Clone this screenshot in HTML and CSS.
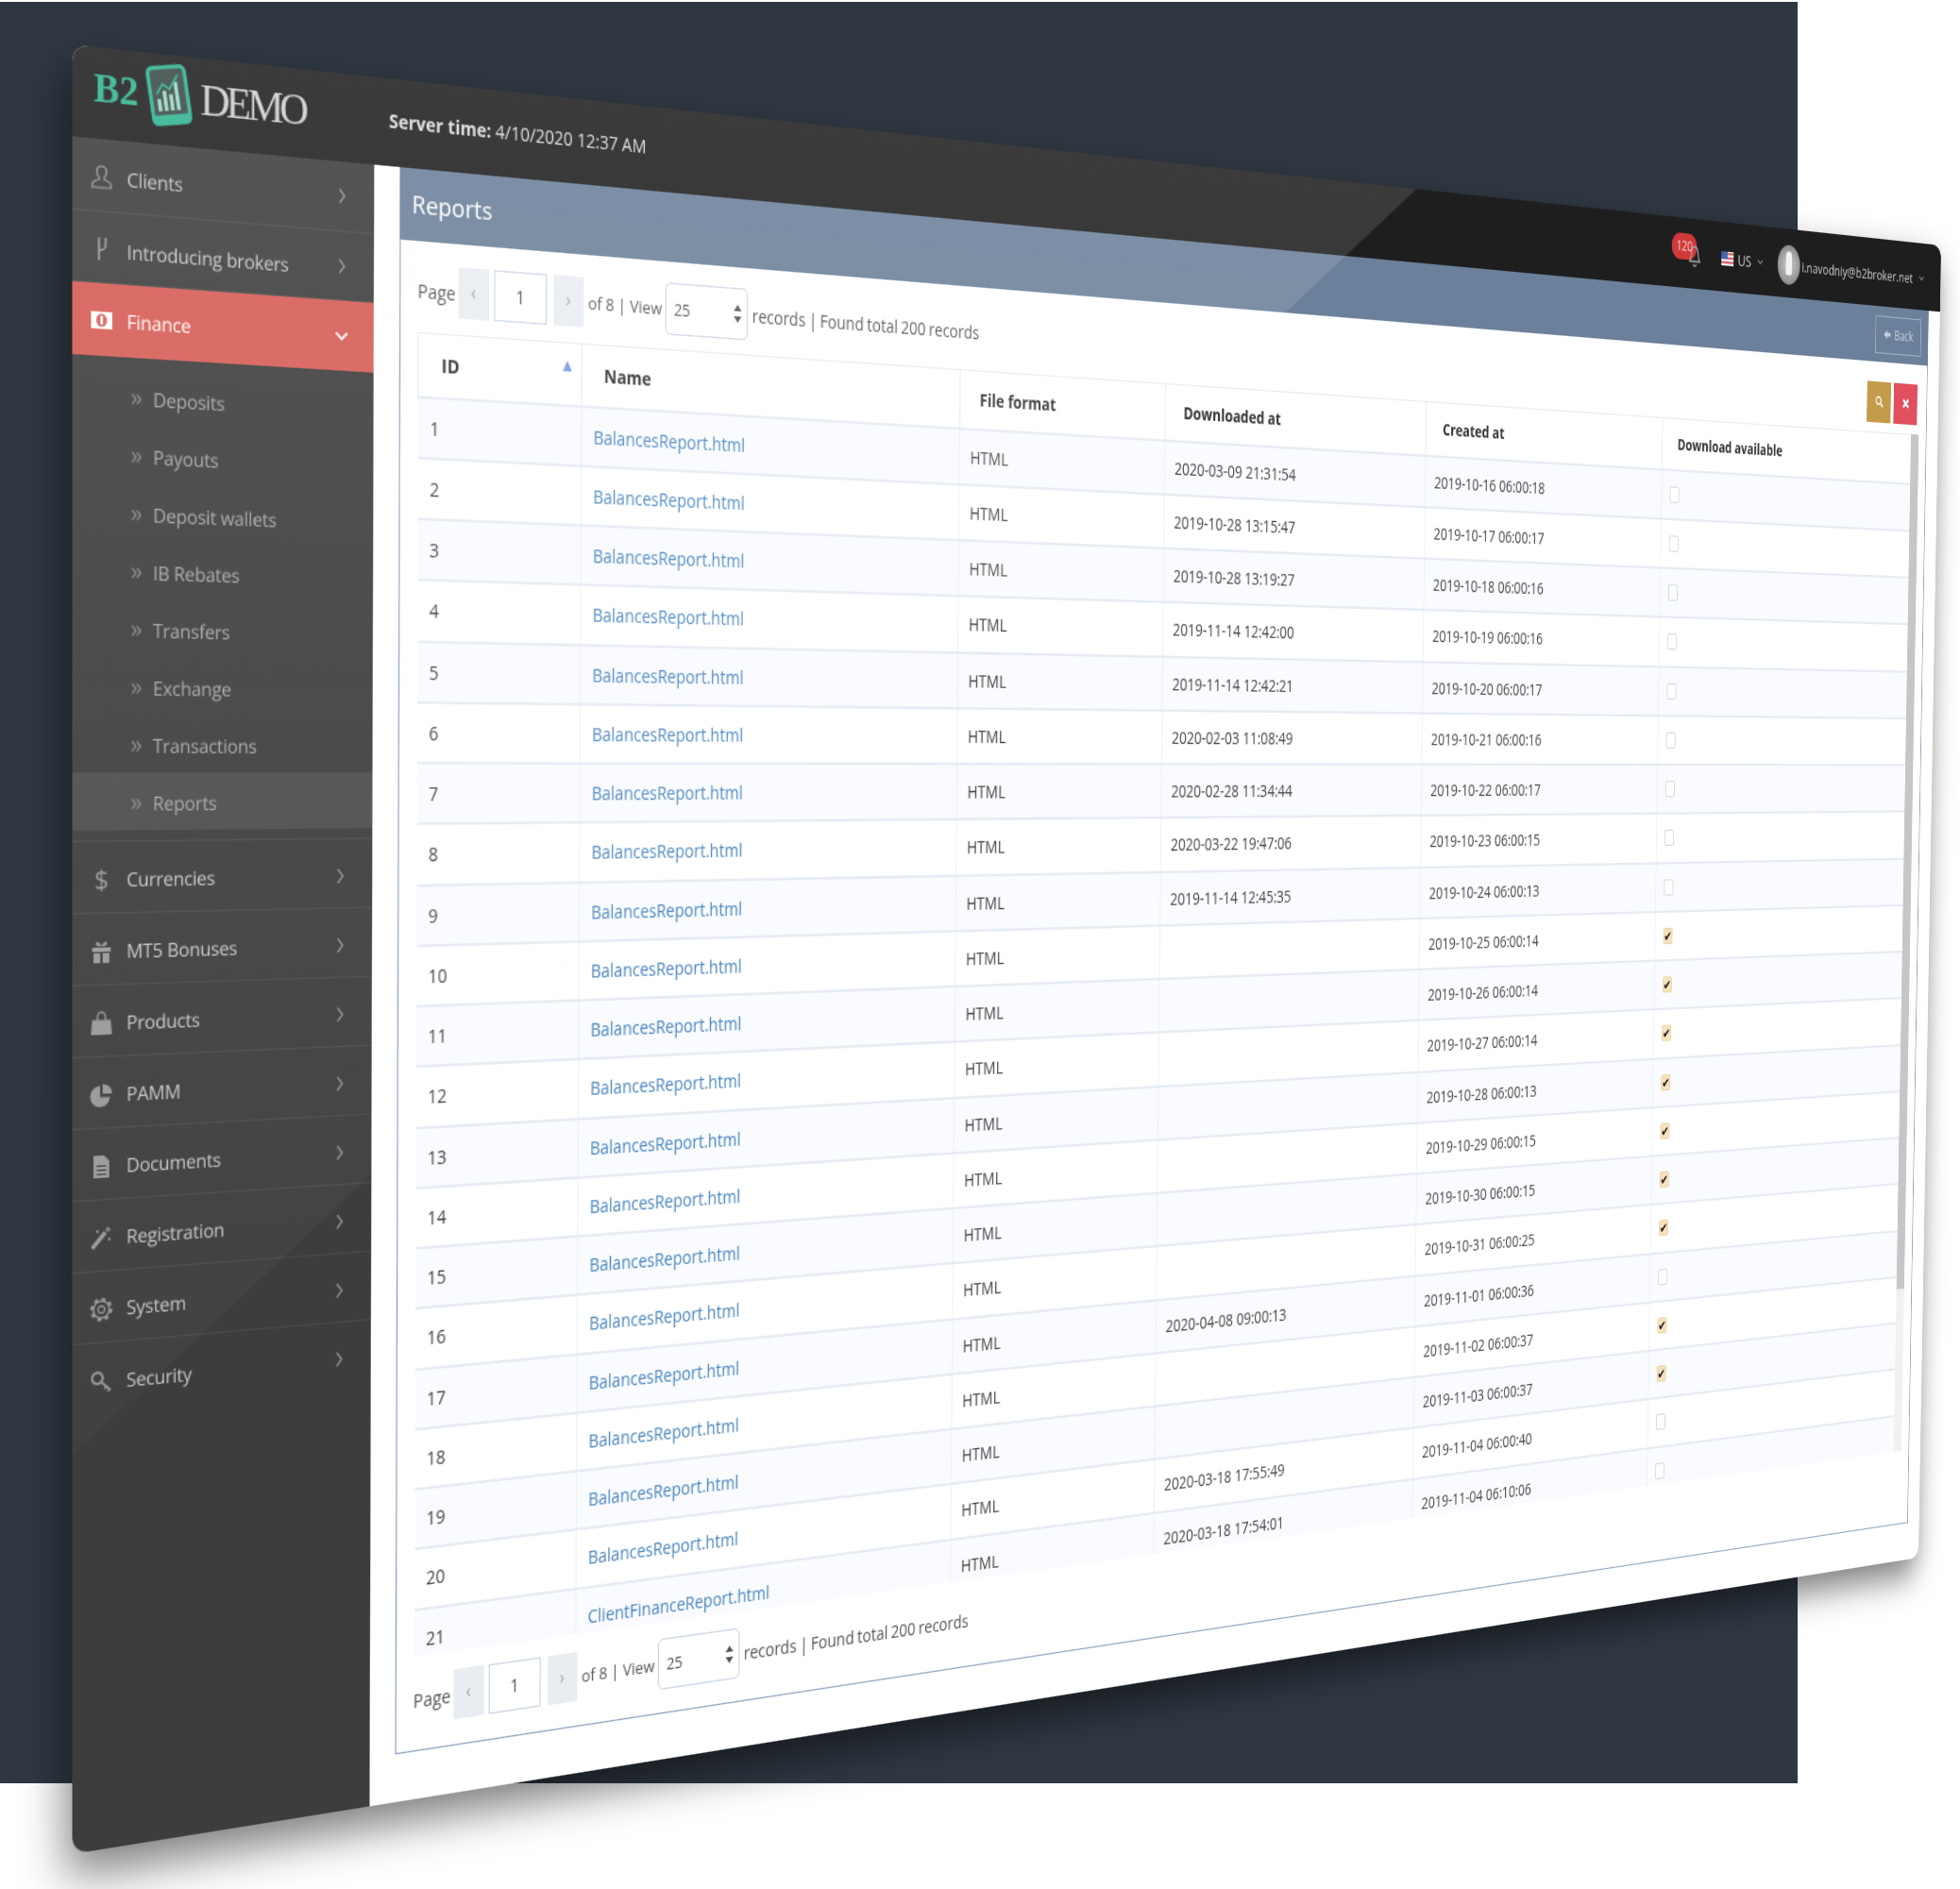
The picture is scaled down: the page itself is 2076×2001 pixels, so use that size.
FILE: index.html
```html
<!DOCTYPE html>
<html lang="en">

<head>
    <meta charset="UTF-8">
    <title>B2 Demo Reports</title>
    <link rel="stylesheet" href="styles.css">
</head>

<body>
    <div class="stage">
        <div class="backdrop"></div>

        <div class="window">
            <header class="topbar">
                <div class="logo">
                    <span class="logo-b2">B2</span>
                    <svg class="logo-phone" viewBox="0 0 34 45">
                        <rect x="2" y="1.500" width="30" height="42" rx="4" fill="#3a4a46" stroke="#2fb491" stroke-width="3"/>
                        <rect x="2" y="37" width="30" height="6.500" fill="#2fb491"/>
                        <path d="M7 34V25h3v9zM12 34V19h3v15zM17 34V22h3v12zM22 34V13h3v21z" fill="#9fd8c6"/>
                        <path d="M7 21l6-7 5 4 8-10" fill="none" stroke="#2fb491" stroke-width="1.500"/>
                    </svg>
                    <span class="logo-demo">DEMO</span>
                </div>
                <div class="server-time"><b>Server time:</b> 4/10/2020 12:37 AM</div>
                <div class="topbar-right">
                    <div class="bell">
                        <span class="bell-badge">120</span>
                        <svg class="bell-icon" viewBox="0 0 15 21">
                            <path d="M7.500 1.500c-3 0-4 2.500-4 5.500 0 4-1 6-2.500 8h13c-1.500-2-2.500-4-2.500-8 0-3-1-5.500-4-5.500zM5.500 17.500c0 2.500 4 2.500 4 0" fill="none" stroke="#aaa" stroke-width="1.300"/>
                        </svg>
                    </div>
                    <svg class="flag" viewBox="0 0 16 13">
                        <rect width="16" height="13" fill="#eee"/>
                        <path d="M0 1h16v2H0zM0 5h16v2H0zM0 9h16v2H0z" fill="#d9646a"/>
                        <rect width="8" height="7" fill="#4a66b0"/>
                    </svg>
                    <span class="lang">US</span>
                    <svg class="mini-chevron" viewBox="0 0 8 6"><path d="M1 1l3 3 3-3" fill="none" stroke="#888" stroke-width="1.200"/></svg>
                    <div class="avatar"></div>
                    <span class="user-mail">i.navodniy@b2broker.net</span>
                    <svg class="mini-chevron" viewBox="0 0 8 6"><path d="M1 1l3 3 3-3" fill="none" stroke="#888" stroke-width="1.200"/></svg>
                </div>
            </header>

            <div class="layout">
                <nav class="sidebar">
                    <a class="nav-item">
                        <svg class="nav-icon" viewBox="0 0 18 18"><path d="M9 1c-2.300 0-3.600 1.800-3.600 4 0 1.600.7 3 1.600 3.800v1.700c-2.400.6-5 1.500-5 3.300V16h14v-2.200c0-1.800-2.600-2.700-5-3.300V8.800c.9-.8 1.600-2.200 1.600-3.800C12.600 2.800 11.300 1 9 1z" fill="none" stroke="#999" stroke-width="1.200"/></svg>
                        <span class="nav-label">Clients</span>
                        <svg class="nav-chevron" viewBox="0 0 6 12"><path d="M1 1l4 5-4 5" fill="none" stroke="#999" stroke-width="1.200"/></svg>
                    </a>
                    <a class="nav-item short">
                        <svg class="nav-icon" viewBox="0 0 18 18"><path d="M7 1v16M7 10c3 0 5-2 5-4V1" fill="none" stroke="#999" stroke-width="1.500"/></svg>
                        <span class="nav-label">Introducing brokers</span>
                        <svg class="nav-chevron" viewBox="0 0 6 12"><path d="M1 1l4 5-4 5" fill="none" stroke="#999" stroke-width="1.200"/></svg>
                    </a>
                    <a class="nav-item active">
                        <svg class="nav-icon" viewBox="0 0 18 18">
                            <rect x="1" y="3" width="16" height="12" fill="#fff"/>
                            <ellipse cx="9" cy="9" rx="4" ry="4.500" fill="#d65c54"/>
                            <rect x="8" y="6" width="2" height="6" fill="#fff"/>
                        </svg>
                        <span class="nav-label">Finance</span>
                        <svg class="nav-chevron down" viewBox="0 0 12 8"><path d="M1.500 1.500L6 6l4.500-4.500" fill="none" stroke="#fff" stroke-width="1.600"/></svg>
                    </a>
                    <ul class="subnav">
                        <li><span class="sub-mark">»</span>Deposits</li>
                        <li><span class="sub-mark">»</span>Payouts</li>
                        <li><span class="sub-mark">»</span>Deposit wallets</li>
                        <li><span class="sub-mark">»</span>IB Rebates</li>
                        <li><span class="sub-mark">»</span>Transfers</li>
                        <li><span class="sub-mark">»</span>Exchange</li>
                        <li><span class="sub-mark">»</span>Transactions</li>
                        <li class="current"><span class="sub-mark">»</span>Reports</li>
                    </ul>
                    <a class="nav-item">
                        <span class="nav-icon nav-glyph">$</span>
                        <span class="nav-label">Currencies</span>
                        <svg class="nav-chevron" viewBox="0 0 6 12"><path d="M1 1l4 5-4 5" fill="none" stroke="#999" stroke-width="1.200"/></svg>
                    </a>
                    <a class="nav-item">
                        <svg class="nav-icon" viewBox="0 0 18 18"><path d="M2 6h14v3H2zM3 10h5v7H3zM10 10h5v7h-5zM8 5C6 5 4 4 5 2.500S8 3 9 5c1-2 3-4 4-2.500S12 5 10 5z" fill="#999"/></svg>
                        <span class="nav-label">MT5 Bonuses</span>
                        <svg class="nav-chevron" viewBox="0 0 6 12"><path d="M1 1l4 5-4 5" fill="none" stroke="#999" stroke-width="1.200"/></svg>
                    </a>
                    <a class="nav-item">
                        <svg class="nav-icon" viewBox="0 0 18 18"><path d="M2 6.500h14l1 10.500H1z" fill="#999"/><path d="M6 8V4a3 3 0 0 1 6 0v4" fill="none" stroke="#999" stroke-width="1.200"/></svg>
                        <span class="nav-label">Products</span>
                        <svg class="nav-chevron" viewBox="0 0 6 12"><path d="M1 1l4 5-4 5" fill="none" stroke="#999" stroke-width="1.200"/></svg>
                    </a>
                    <a class="nav-item">
                        <svg class="nav-icon" viewBox="0 0 18 18"><path d="M8 2.500a7.500 7.500 0 1 0 7.500 8H8zM10 1a7 7 0 0 1 7 7h-7z" fill="#999"/></svg>
                        <span class="nav-label">PAMM</span>
                        <svg class="nav-chevron" viewBox="0 0 6 12"><path d="M1 1l4 5-4 5" fill="none" stroke="#999" stroke-width="1.200"/></svg>
                    </a>
                    <a class="nav-item">
                        <svg class="nav-icon" viewBox="0 0 18 18"><path fill-rule="evenodd" d="M3 1h8l4 4v12H3zM5.500 8v1h7V8zM5.500 11v1h7v-1zM5.500 14v1h7v-1z" fill="#999"/></svg>
                        <span class="nav-label">Documents</span>
                        <svg class="nav-chevron" viewBox="0 0 6 12"><path d="M1 1l4 5-4 5" fill="none" stroke="#999" stroke-width="1.200"/></svg>
                    </a>
                    <a class="nav-item">
                        <svg class="nav-icon" viewBox="0 0 18 18"><path d="M2 16L12 5" stroke="#999" stroke-width="3" fill="none"/><path d="M14 1v4M12 3h4M6 3v2M5 4h2M15 9v2M14 10h2" stroke="#999" stroke-width="1" fill="none"/></svg>
                        <span class="nav-label">Registration</span>
                        <svg class="nav-chevron" viewBox="0 0 6 12"><path d="M1 1l4 5-4 5" fill="none" stroke="#999" stroke-width="1.200"/></svg>
                    </a>
                    <a class="nav-item">
                        <svg class="nav-icon" viewBox="0 0 18 18"><circle cx="9" cy="9" r="6" fill="none" stroke="#999" stroke-width="1.200"/><circle cx="9" cy="9" r="7.400" fill="none" stroke="#999" stroke-width="2" stroke-dasharray="3 2.800"/><circle cx="9" cy="9" r="2.500" fill="none" stroke="#999" stroke-width="1.200"/></svg>
                        <span class="nav-label">System</span>
                        <svg class="nav-chevron" viewBox="0 0 6 12"><path d="M1 1l4 5-4 5" fill="none" stroke="#999" stroke-width="1.200"/></svg>
                    </a>
                    <a class="nav-item">
                        <svg class="nav-icon" viewBox="0 0 18 18"><circle cx="6" cy="7" r="4" fill="none" stroke="#999" stroke-width="1.800"/><path d="M9 10l7 6M13 13l-1.500 2M15.500 15l-1.500 2" stroke="#999" stroke-width="1.500" fill="none"/></svg>
                        <span class="nav-label">Security</span>
                        <svg class="nav-chevron" viewBox="0 0 6 12"><path d="M1 1l4 5-4 5" fill="none" stroke="#999" stroke-width="1.200"/></svg>
                    </a>
                </nav>

                <main class="content">
                    <div class="title-bar">
                        <h1>Reports</h1>
                        <a class="back-btn">
                            <svg viewBox="0 0 12 12"><path d="M6 1L1 6l5 5V8h5V4H6z" fill="#c5d0dc"/></svg>
                            Back
                        </a>
                    </div>

                    <div class="panel">
                        <div class="pager">
                            <span>Page</span>
                            <span class="page-arrow">‹</span>
                            <span class="page-box">1</span>
                            <span class="page-arrow next">›</span>
                            <span class="page-of">of 8 | View</span>
                            <span class="view-select">25
                                <svg viewBox="0 0 7 14"><path d="M3.500 0L7 5H0zM3.500 14L0 9h7z" fill="#555"/></svg>
                            </span>
                            <span class="page-total">records | Found total 200 records</span>
                            <span class="tool-btn search">
                                <svg viewBox="0 0 12 12"><circle cx="5" cy="5" r="3.500" fill="none" stroke="#fff" stroke-width="1.500"/><path d="M8 8l3 3" stroke="#fff" stroke-width="1.800"/></svg>
                            </span>
                            <span class="tool-btn clear">
                                <svg viewBox="0 0 10 10"><path d="M2 2l6 6M8 2L2 8" stroke="#fff" stroke-width="2"/></svg>
                            </span>
                        </div>

                        <div class="table-wrap">
                            <div class="table-clip">
                                <table class="reports">
                                    <colgroup>
                                        <col class="c-id"><col class="c-name"><col class="c-format"><col class="c-down"><col class="c-created"><col class="c-avail">
                                    </colgroup>
                                    <thead>
                                        <tr>
                                            <th class="sorted">ID</th>
                                            <th>Name</th>
                                            <th>File format</th>
                                            <th>Downloaded at</th>
                                            <th>Created at</th>
                                            <th>Download available</th>
                                        </tr>
                                    </thead>
                                    <tbody>
                                        <tr><td>1</td><td><a>BalancesReport.html</a></td><td>HTML</td><td>2020-03-09 21:31:54</td><td>2019-10-16 06:00:18</td><td><i class="check"></i></td></tr>
                                        <tr><td>2</td><td><a>BalancesReport.html</a></td><td>HTML</td><td>2019-10-28 13:15:47</td><td>2019-10-17 06:00:17</td><td><i class="check"></i></td></tr>
                                        <tr><td>3</td><td><a>BalancesReport.html</a></td><td>HTML</td><td>2019-10-28 13:19:27</td><td>2019-10-18 06:00:16</td><td><i class="check"></i></td></tr>
                                        <tr><td>4</td><td><a>BalancesReport.html</a></td><td>HTML</td><td>2019-11-14 12:42:00</td><td>2019-10-19 06:00:16</td><td><i class="check"></i></td></tr>
                                        <tr><td>5</td><td><a>BalancesReport.html</a></td><td>HTML</td><td>2019-11-14 12:42:21</td><td>2019-10-20 06:00:17</td><td><i class="check"></i></td></tr>
                                        <tr><td>6</td><td><a>BalancesReport.html</a></td><td>HTML</td><td>2020-02-03 11:08:49</td><td>2019-10-21 06:00:16</td><td><i class="check"></i></td></tr>
                                        <tr><td>7</td><td><a>BalancesReport.html</a></td><td>HTML</td><td>2020-02-28 11:34:44</td><td>2019-10-22 06:00:17</td><td><i class="check"></i></td></tr>
                                        <tr><td>8</td><td><a>BalancesReport.html</a></td><td>HTML</td><td>2020-03-22 19:47:06</td><td>2019-10-23 06:00:15</td><td><i class="check"></i></td></tr>
                                        <tr><td>9</td><td><a>BalancesReport.html</a></td><td>HTML</td><td>2019-11-14 12:45:35</td><td>2019-10-24 06:00:13</td><td><i class="check"></i></td></tr>
                                        <tr><td>10</td><td><a>BalancesReport.html</a></td><td>HTML</td><td></td><td>2019-10-25 06:00:14</td><td><i class="check on">✔</i></td></tr>
                                        <tr><td>11</td><td><a>BalancesReport.html</a></td><td>HTML</td><td></td><td>2019-10-26 06:00:14</td><td><i class="check on">✔</i></td></tr>
                                        <tr><td>12</td><td><a>BalancesReport.html</a></td><td>HTML</td><td></td><td>2019-10-27 06:00:14</td><td><i class="check on">✔</i></td></tr>
                                        <tr><td>13</td><td><a>BalancesReport.html</a></td><td>HTML</td><td></td><td>2019-10-28 06:00:13</td><td><i class="check on">✔</i></td></tr>
                                        <tr><td>14</td><td><a>BalancesReport.html</a></td><td>HTML</td><td></td><td>2019-10-29 06:00:15</td><td><i class="check on">✔</i></td></tr>
                                        <tr><td>15</td><td><a>BalancesReport.html</a></td><td>HTML</td><td></td><td>2019-10-30 06:00:15</td><td><i class="check on">✔</i></td></tr>
                                        <tr><td>16</td><td><a>BalancesReport.html</a></td><td>HTML</td><td></td><td>2019-10-31 06:00:25</td><td><i class="check on">✔</i></td></tr>
                                        <tr><td>17</td><td><a>BalancesReport.html</a></td><td>HTML</td><td>2020-04-08 09:00:13</td><td>2019-11-01 06:00:36</td><td><i class="check"></i></td></tr>
                                        <tr><td>18</td><td><a>BalancesReport.html</a></td><td>HTML</td><td></td><td>2019-11-02 06:00:37</td><td><i class="check on">✔</i></td></tr>
                                        <tr><td>19</td><td><a>BalancesReport.html</a></td><td>HTML</td><td></td><td>2019-11-03 06:00:37</td><td><i class="check on">✔</i></td></tr>
                                        <tr><td>20</td><td><a>BalancesReport.html</a></td><td>HTML</td><td>2020-03-18 17:55:49</td><td>2019-11-04 06:00:40</td><td><i class="check"></i></td></tr>
                                        <tr><td>21</td><td><a>ClientFinanceReport.html</a></td><td>HTML</td><td>2020-03-18 17:54:01</td><td>2019-11-04 06:10:06</td><td><i class="check"></i></td></tr>
                                    </tbody>
                                </table>
                            </div>
                            <div class="scroll-track"><div class="scroll-thumb"></div></div>
                        </div>

                        <div class="pager">
                            <span>Page</span>
                            <span class="page-arrow">‹</span>
                            <span class="page-box">1</span>
                            <span class="page-arrow next">›</span>
                            <span class="page-of">of 8 | View</span>
                            <span class="view-select">25
                                <svg viewBox="0 0 7 14"><path d="M3.500 0L7 5H0zM3.500 14L0 9h7z" fill="#555"/></svg>
                            </span>
                            <span class="page-total">records | Found total 200 records</span>
                        </div>
                    </div>
                </main>
            </div>

            <div class="gloss"></div>
        </div>
    </div>
</body>

</html>
```

FILE: styles.css
```css
* {
    box-sizing: border-box;
}

body {
    margin: 0;
    background: #fff;
    font-family: "Open Sans", sans-serif;
    font-size: 14px;
    color: #555;
}

.stage {
    position: relative;
    width: 2076px;
    height: 2001px;
    overflow: hidden;
    padding-top: 2px;
}

.backdrop {
    width: 1904px;
    height: 1887px;
    background: #2f3742;
}

/* the whole app is laid out flat, 1920x1280, then tilted onto its four corners */
.window {
    position: absolute;
    left: 0;
    top: 0;
    width: 1920px;
    height: 1280px;
    display: flex;
    flex-direction: column;
    background: #fff;
    border-radius: 12px;
    overflow: hidden;
    box-shadow: -4px 16px 34px rgba(0, 0, 0, 0.5);
    transform-origin: 0 0;
    transform: matrix3d(1.441089, 0.162797, 0, 0.000199464,
            0.0010144, 1.523703, 0, 0.00001326,
            0, 0, 1, 0,
            76.5, 47, 0, 1);
    filter: blur(0.7px);
}

.gloss {
    position: absolute;
    inset: 0;
    clip-path: polygon(0 0, 1247px 0, 0 995px);
    background: linear-gradient(180deg, rgba(255, 255, 255, 0.13), rgba(255, 255, 255, 0.02) 78%);
    pointer-events: none;
}

/* top bar */
.topbar {
    display: flex;
    align-items: center;
    flex: none;
    height: 64px;
    background: #1e1e1e;
    color: #ddd;
}

.logo {
    display: flex;
    align-items: center;
    width: 247px;
    padding-left: 16px;
    margin-top: -8px;
}

.logo-b2 {
    width: 41px;
    font-family: "Liberation Serif", serif;
    font-size: 29px;
    font-weight: bold;
    color: #2fb491;
}

.logo-phone {
    width: 32px;
    height: 45px;
    transform: rotate(-9deg);
}

.logo-demo {
    margin-left: 8px;
    margin-top: 2px;
    font-family: "Liberation Serif", serif;
    font-size: 32px;
    letter-spacing: -3px;
    color: #cfcfcf;
}

.server-time {
    margin-top: -4px;
}

.topbar-right {
    display: flex;
    align-items: center;
    margin-left: auto;
    margin-top: 3px;
    padding-right: 23px;
}

.bell {
    position: relative;
    width: 37px;
    height: 40px;
    margin-right: 27px;
}

.bell-badge {
    position: absolute;
    left: 0;
    top: 0;
    width: 32px;
    height: 24px;
    border-radius: 11px;
    background: #d03a3a;
    color: #f3d5d5;
    font-size: 12px;
    line-height: 24px;
    text-align: center;
}

.bell-icon {
    position: absolute;
    left: 22px;
    top: 10px;
    width: 15px;
    height: 21px;
}

.flag {
    width: 16px;
    height: 13px;
}

.lang {
    margin-left: 5px;
    color: #ccc;
}

.mini-chevron {
    width: 8px;
    height: 6px;
    margin-left: 8px;
}

.avatar {
    position: relative;
    width: 30px;
    height: 37px;
    margin-left: 19px;
    border-radius: 50%;
    background: radial-gradient(circle, #ccc, #777);
}

.avatar::after {
    content: "";
    position: absolute;
    left: 11px;
    top: 6px;
    width: 8px;
    height: 22px;
    border-radius: 4px 4px 2px 2px;
    background: #f2f2f2;
}

.user-mail {
    margin-left: 2px;
    font-size: 13px;
    color: #ccc;
}

/* sidebar */
.layout {
    display: flex;
    flex: 1;
    min-height: 0;
}

.sidebar {
    flex: none;
    width: 235px;
    background: #3d3d3d;
    color: #c9c9c9;
    letter-spacing: -0.2px;
}

.nav-item {
    display: flex;
    align-items: center;
    height: 51px;
    padding: 3px 23px 0 13px;
    border-bottom: 1px solid rgba(255, 255, 255, 0.07);
}

.nav-item:last-child {
    border-bottom: 0;
}

.nav-item.short {
    height: 50px;
}

.nav-item:nth-child(-n+2) .nav-chevron {
    margin-top: -3px;
}

.nav-item.active {
    padding-top: 0;
    background: #d65c54;
    color: #fff;
    border-bottom: 0;
}

.nav-icon {
    flex: none;
    width: 18px;
    height: 18px;
    margin-right: 10px;
}

.nav-glyph {
    font-size: 19px;
    line-height: 18px;
    text-align: center;
    color: #999;
}

.nav-label {
    flex: 1;
}

.nav-chevron {
    width: 6px;
    height: 12px;
}

.nav-chevron.down {
    width: 12px;
    height: 8px;
    margin-right: -3px;
}

.subnav {
    margin: 0;
    padding: 7px 0 7px;
    list-style: none;
    color: #a8a8a8;
    border-bottom: 1px solid rgba(255, 255, 255, 0.07);
}

.subnav li {
    height: 41px;
    padding-left: 44px;
    line-height: 41px;
}

.subnav li.current {
    background: rgba(255, 255, 255, 0.08);
}

.sub-mark {
    display: inline-block;
    width: 17px;
    font-size: 18px;
    color: #858585;
}

/* main */
.content {
    flex: 1;
    min-width: 0;
    display: flex;
    flex-direction: column;
    padding: 0 16px 36px 21px;
}

.title-bar {
    display: flex;
    align-items: center;
    justify-content: space-between;
    flex: none;
    height: 53px;
    padding: 0 10px;
    background: #6b809a;
}

.title-bar h1 {
    margin: -3px 0 0;
    font-size: 18.500px;
    font-weight: 400;
    color: #fff;
}

.back-btn {
    display: flex;
    align-items: center;
    justify-content: center;
    gap: 4px;
    width: 64px;
    height: 36px;
    border: 1px solid #9fb0c4;
    font-size: 12px;
    color: #c5d0dc;
}

.back-btn svg {
    width: 11px;
    height: 11px;
}

.panel {
    flex: 1;
    min-height: 0;
    display: flex;
    flex-direction: column;
    padding: 16px 10px 19px 14px;
    border: 1px solid #8fa5c0;
    border-top: 0;
}

.pager {
    display: flex;
    align-items: center;
    gap: 4px;
    flex: none;
    height: 40px;
}

.page-of {
    width: 64px;
    font-size: 13px;
    white-space: nowrap;
}

.page-total {
    word-spacing: -0.600px;
}

.page-arrow {
    width: 26px;
    height: 38px;
    margin-left: -2px;
    background: #e9edf2;
    color: #9aa3ad;
    line-height: 36px;
    text-align: center;
}

.page-arrow.next {
    margin-left: 2px;
}

.page-box {
    width: 45px;
    height: 38px;
    border: 1px solid #c9d4e2;
    line-height: 36px;
    text-align: center;
}

.view-select {
    display: flex;
    align-items: center;
    justify-content: space-between;
    width: 75px;
    height: 40px;
    padding: 0 5px 0 7px;
    border: 1px solid #c9d4e2;
    border-radius: 5px;
    font-size: 13px;
}

.view-select svg {
    width: 7px;
    height: 14px;
}

.tool-btn {
    display: flex;
    align-items: center;
    justify-content: center;
    width: 33px;
    height: 39px;
    margin-top: 4px;
}

.tool-btn svg {
    width: 12px;
    height: 12px;
}

.tool-btn.search {
    margin-left: auto;
    background: #c49b4a;
}

.tool-btn.clear {
    margin-right: 3px;
    background: #e0505f;
}

.table-wrap {
    display: flex;
    flex: none;
    height: 988px;
    margin: 11px 0 13px;
}

.table-clip {
    flex: 1;
    overflow: hidden;
}

.scroll-track {
    flex: none;
    width: 11px;
    background: #f1f1f1;
}

.scroll-thumb {
    height: 829px;
    background: #c6c6c6;
}

.reports {
    width: 1611px;
    border-collapse: collapse;
    table-layout: fixed;
    color: #444;
}

.c-id { width: 139px; }
.c-name { width: 351px; }
.c-format { width: 210px; }
.c-down { width: 290px; }
.c-created { width: 288px; }
.c-avail { width: 333px; }

.reports th {
    height: 47px;
    padding: 0 19px;
    border: 1px solid #e6ebf3;
    border-bottom-width: 2px;
    font-weight: 700;
    color: #333;
    text-align: left;
    white-space: nowrap;
}

.reports th.sorted {
    position: relative;
}

.reports th.sorted::after {
    content: "";
    position: absolute;
    right: 8px;
    top: 13px;
    border-left: 4px solid transparent;
    border-right: 4px solid transparent;
    border-bottom: 8px solid #7e9be0;
}

.reports td {
    height: 45.250px;
    padding: 0 10px;
    border-right: 1px solid #eef1f6;
    border-bottom: 2px solid #e6ebf3;
    white-space: nowrap;
}

.reports tbody tr:nth-child(odd) {
    background: #f9fbfe;
}

.reports a {
    color: #4a86bd;
}

.check {
    display: block;
    width: 12px;
    height: 15px;
    border: 1px solid #d3d8df;
    border-radius: 2px;
    background: #fff;
    font-style: normal;
    font-size: 12px;
    line-height: 13px;
    text-align: center;
    color: #111;
}

.check.on {
    background: #f6e2bd;
    border-color: #ecd6ae;
}
```
